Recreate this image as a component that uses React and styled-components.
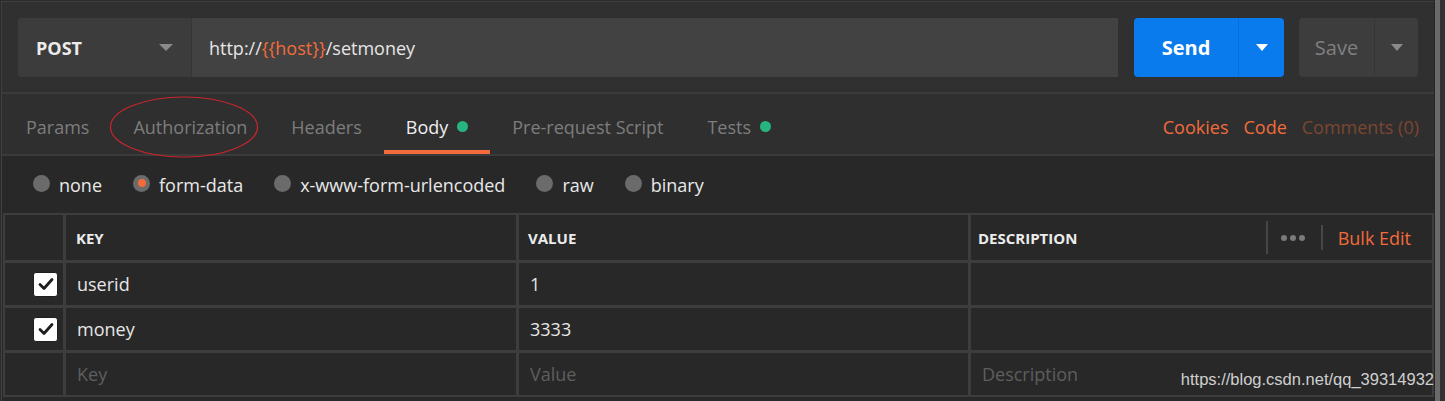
import React from "react";
import styled, { createGlobalStyle } from "styled-components";

const Global = createGlobalStyle`
  html, body { margin: 0; padding: 0; background: #2b2b2b; }
  body { font-family: "Open Sans", "Noto Sans", sans-serif; }
  * { box-sizing: border-box; }
`;

const Page = styled.div`
  position: relative;
  width: 1445px;
  height: 401px;
  overflow: hidden;
  display: flex;
  background: #2b2b2b;
`;

const Main = styled.div`
  width: 1433px;
  margin-top: 1px;
  margin-left: 1px;
  border-top: 1px solid #404040;
  border-left: 1px solid #404040;
  display: flex;
  flex-direction: column;
  background: #303030;
`;

const Gutter = styled.div`
  flex: 1;
  display: flex;
  border-left: 1px solid #262626;
  background: #333333;
`;

const Thumb = styled.div`
  width: 5px;
  background: #6a6a6a;
`;

const UrlBar = styled.div`
  display: flex;
  align-items: stretch;
  height: 92px;
  padding: 16px 16px 15px;
  border-bottom: 2px solid #3b3b3b;
`;

const Method = styled.div`
  width: 174px;
  display: flex;
  align-items: center;
  justify-content: space-between;
  padding: 0 18px 0 18px;
  background: #3c3c3c;
  border-radius: 3px 0 0 3px;
  border-right: 1px solid #363636;
  color: #ececec;
  font-weight: 700;
  font-size: 18px;
`;

const Caret = styled.span`
  width: 0;
  height: 0;
  border-left: ${(p) => p.$w / 2}px solid transparent;
  border-right: ${(p) => p.$w / 2}px solid transparent;
  border-top: ${(p) => p.$h}px solid ${(p) => p.$c};
`;

const UrlInput = styled.div`
  flex: 1;
  display: flex;
  align-items: center;
  padding-left: 17px;
  background: #424242;
  color: #e6e6e6;
  font-size: 18px;
`;

const Var = styled.span`
  color: #f26b3a;
`;

const SplitButton = styled.div`
  display: flex;
  margin-left: ${(p) => p.$ml}px;
  border-radius: 4px;
  overflow: hidden;
  background: ${(p) => p.$bg};
`;

const ButtonLabel = styled.div`
  width: ${(p) => p.$w}px;
  display: flex;
  align-items: center;
  justify-content: center;
  font-size: 20px;
  font-weight: ${(p) => (p.$bold ? 700 : 400)};
  color: ${(p) => p.$c};
  padding-bottom: 1px;
`;

const ButtonArrow = styled.div`
  width: ${(p) => p.$w}px;
  display: flex;
  align-items: center;
  justify-content: center;
  border-left: 1px solid ${(p) => p.$line};
`;

const TabRow = styled.div`
  display: flex;
  align-items: stretch;
  height: 62px;
  padding-left: 2px;
  padding-right: 15px;
  border-bottom: 2px solid #3b3b3b;
  background: #2f2f2f;
`;

const Tab = styled.div`
  display: flex;
  align-items: center;
  padding: 9px 22px 0;
  border-bottom: 4px solid ${(p) => (p.$active ? "#f26b3a" : "transparent")};
  font-size: 18px;
  color: ${(p) => (p.$active ? "#f0f0f0" : "#7d7d7d")};
`;

const Dot = styled.span`
  width: 11px;
  height: 11px;
  margin-left: 9px;
  border-radius: 50%;
  background: #26b47f;
`;

const Links = styled.div`
  margin-left: auto;
  display: flex;
  align-items: center;
  gap: 15px;
  padding-top: 5px;
`;

const Link = styled.span`
  font-size: 18px;
  color: ${(p) => (p.$muted ? "#7c4631" : "#f26b3a")};
`;

const Body = styled.div`
  flex: 1;
  display: flex;
  flex-direction: column;
  background: #282828;
`;

const RadioRow = styled.div`
  display: flex;
  align-items: center;
  gap: 31px;
  height: 57px;
  padding-left: 31px;
`;

const RadioItem = styled.label`
  display: flex;
  align-items: center;
  gap: 9px;
  font-size: 18px;
  color: #e8e8e8;
`;

const Radio = styled.span`
  width: 17px;
  height: 17px;
  margin-top: -3px;
  border-radius: 50%;
  background: #6b6b6b;
  display: flex;
  align-items: center;
  justify-content: center;
  &::after {
    content: "";
    width: 8px;
    height: 8px;
    border-radius: 50%;
    background: ${(p) => (p.$on ? "#f26b3a" : "transparent")};
  }
`;

const Table = styled.div`
  width: 1431px;
  margin-left: 1px;
  display: grid;
  grid-template-columns: 58px 450px 449px 1fr;
  grid-template-rows: 45px 42px 42px 42px;
  gap: 3px;
  padding: 2px;
  background: #3d3d3d;
`;

const HeadCell = styled.div`
  display: flex;
  align-items: center;
  padding-left: ${(p) => p.$pl ?? 9}px;
  background: #282828;
  color: #ececec;
  font-size: 15px;
  font-weight: 700;
`;

const Cell = styled.div`
  display: flex;
  align-items: center;
  padding-left: 11px;
  background: #282828;
  color: ${(p) => (p.$ph ? "#5e5e5e" : "#e6e6e6")};
  font-size: 18px;
`;

const CheckCell = styled.div`
  display: flex;
  align-items: center;
  justify-content: flex-end;
  padding-right: 5px;
  background: #282828;
`;

const Box = styled.span`
  width: 25px;
  height: 25px;
  border-radius: 3px;
  background: #ffffff;
  border: 1px solid #1e1e1e;
  display: flex;
  align-items: center;
  justify-content: center;
`;

const Actions = styled.div`
  margin-left: auto;
  display: flex;
  align-items: center;
  padding-right: 21px;
  font-weight: 400;
`;

const VSep = styled.span`
  width: 2px;
  height: ${(p) => p.$h}px;
  background: #474747;
`;

const Dots = styled.span`
  display: flex;
  gap: 3px;
  margin: 0 16px 0 13px;
  & > i {
    width: 6px;
    height: 6px;
    border-radius: 50%;
    background: #7a7a7a;
  }
`;

const BulkEdit = styled.span`
  margin-left: 15px;
  font-size: 18px;
  color: #f26b3a;
`;

const Watermark = styled.div`
  position: absolute;
  right: 11px;
  top: 370px;
  font-family: "Liberation Sans", Arial, sans-serif;
  font-size: 16.5px;
  color: #cfcfcf;
`;

const Annotation = styled.svg`
  position: absolute;
  left: 108px;
  top: 94px;
  overflow: visible;
`;

function Check() {
  return (
    <Box>
      <svg width="18" height="18" viewBox="0 0 18 18">
        <path d="M3 9.5 L7 13.5 L15 4.5" fill="none" stroke="#1e1e1e" strokeWidth="2.8" strokeLinecap="round" strokeLinejoin="round" />
      </svg>
    </Box>
  );
}

const rows = [
  { key: "userid", value: "1", on: true },
  { key: "money", value: "3333", on: true },
];

export default function App() {
  return (
    <>
      <Global />
      <Page>
        <Main>
          <UrlBar>
            <Method>
              POST
              <Caret $w={14} $h={7} $c="#8a8a8a" />
            </Method>
            <UrlInput>
              http://<Var>{"{{host}}"}</Var>/setmoney
            </UrlInput>
            <SplitButton $ml={16} $bg="#097bed">
              <ButtonLabel $w={104} $bold $c="#ffffff">Send</ButtonLabel>
              <ButtonArrow $w={46} $line="#0a6fd4">
                <Caret $w={13} $h={7} $c="#ffffff" />
              </ButtonArrow>
            </SplitButton>
            <SplitButton $ml={15} $bg="#3d3d3d">
              <ButtonLabel $w={75} $c="#808080">Save</ButtonLabel>
              <ButtonArrow $w={44} $line="#363636">
                <Caret $w={13} $h={7} $c="#8a8a8a" />
              </ButtonArrow>
            </SplitButton>
          </UrlBar>
          <TabRow>
            <Tab>Params</Tab>
            <Tab>Authorization</Tab>
            <Tab>Headers</Tab>
            <Tab $active>
              Body<Dot />
            </Tab>
            <Tab>Pre-request Script</Tab>
            <Tab>
              Tests<Dot />
            </Tab>
            <Links>
              <Link>Cookies</Link>
              <Link>Code</Link>
              <Link $muted>Comments (0)</Link>
            </Links>
          </TabRow>
          <Body>
            <RadioRow>
              <RadioItem><Radio />none</RadioItem>
              <RadioItem><Radio $on />form-data</RadioItem>
              <RadioItem><Radio />x-www-form-urlencoded</RadioItem>
              <RadioItem><Radio />raw</RadioItem>
              <RadioItem><Radio />binary</RadioItem>
            </RadioRow>
            <Table>
              <CheckCell />
              <HeadCell $pl={10}>KEY</HeadCell>
              <HeadCell>VALUE</HeadCell>
              <HeadCell $pl={7}>
                DESCRIPTION
                <Actions>
                  <VSep $h={33} />
                  <Dots><i /><i /><i /></Dots>
                  <VSep $h={25} />
                  <BulkEdit>Bulk Edit</BulkEdit>
                </Actions>
              </HeadCell>
              {rows.map((r) => (
                <React.Fragment key={r.key}>
                  <CheckCell>{r.on && <Check />}</CheckCell>
                  <Cell>{r.key}</Cell>
                  <Cell>{r.value}</Cell>
                  <Cell />
                </React.Fragment>
              ))}
              <CheckCell />
              <Cell $ph>Key</Cell>
              <Cell $ph>Value</Cell>
              <Cell $ph>Description</Cell>
            </Table>
          </Body>
        </Main>
        <Gutter>
          <Thumb />
        </Gutter>
        <Annotation width="150" height="64" viewBox="0 0 150 64">
          <ellipse cx="76" cy="33" rx="73.5" ry="30" fill="none" stroke="#c8262c" strokeWidth="1.2" />
        </Annotation>
        <Watermark>https://blog.csdn.net/qq_39314932</Watermark>
      </Page>
    </>
  );
}
